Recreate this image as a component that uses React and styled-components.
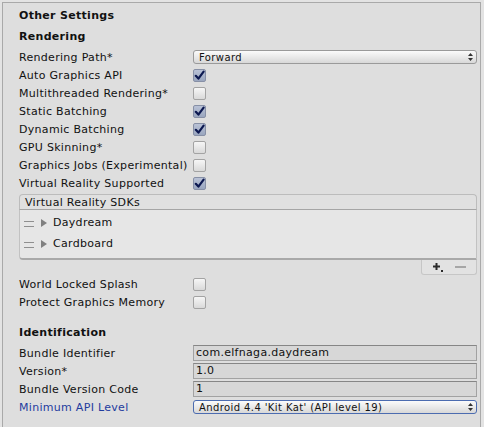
import React from 'react';
import styled, {createGlobalStyle} from 'styled-components';

const GlobalStyle = createGlobalStyle`
  html, body {
    margin: 0;
    padding: 0;
    background: #e3e3e3;
  }
  body {
    font-family: "DejaVu Sans", Verdana, sans-serif;
    font-size: 11px;
    letter-spacing: 0.3px;
    color: #111;
  }
`;

const Panel = styled.div`
  margin: 2px 3px 0 2px;
  height: 425px;
  box-sizing: border-box;
  border: 1px solid #a9a9a9;
  border-bottom: none;
  background: #dedede;
  padding: 4px 3px 0 13px;
`;

const Title = styled.div`
  height: 18px;
  line-height: 18px;
  padding-left: 3px;
  font-weight: bold;
`;

const Header = styled.div`
  height: 18px;
  line-height: 18px;
  margin-top: ${p => p.$top}px;
  margin-bottom: 2px;
  padding-left: 3px;
  font-weight: bold;
`;

const Row = styled.div`
  display: flex;
  align-items: center;
  height: 18px;
`;

const Label = styled.div`
  width: 177px;
  flex: none;
  padding-left: 3px;
  box-sizing: border-box;
  white-space: nowrap;
  color: ${p => (p.$blue ? '#1f3c9e' : '#111')};
`;

const Box = styled.div`
  width: 13px;
  height: 13px;
  box-sizing: border-box;
  border: 1px solid ${p => (p.$on ? '#8790a6' : '#a3a3a3')};
  border-radius: 2px;
  background: ${p =>
    p.$on
      ? 'linear-gradient(#b9c2d6, #9aa6bf)'
      : 'linear-gradient(#f6f6f6, #d9d9d9)'};
  display: flex;
  align-items: center;
  justify-content: center;
`;

const Popup = styled.div`
  flex: 1;
  height: 14px;
  box-sizing: border-box;
  border: 1px solid ${p => (p.$blue ? '#4c6cb0' : '#9a9a9a')};
  border-radius: 3px;
  background: linear-gradient(#fbfbfb, #e6e6e6 60%, #d8d8d8);
  display: flex;
  align-items: center;
  justify-content: space-between;
  padding: 0 3px 0 5px;
  font-size: 10px;
  letter-spacing: 0.4px;
`;

const Field = styled.div`
  flex: 1;
  height: 16px;
  line-height: 14px;
  box-sizing: border-box;
  border: 1px solid #a2a2a2;
  border-top-color: #868686;
  background: #d7d7d7;
  padding-left: 2px;
  font-size: 11px;
`;

const SdkBox = styled.div`
  margin: 2px 0 0 3px;
`;

const SdkHead = styled.div`
  height: 16px;
  line-height: 16px;
  box-sizing: border-box;
  border: 1px solid #bcbcbc;
  border-bottom-color: #a5a5a5;
  border-radius: 4px 4px 0 0;
  background: #e0e0e0;
  padding-left: 5px;
`;

const SdkList = styled.div`
  box-sizing: border-box;
  border: 1px solid #c2c2c2;
  border-top: none;
  border-bottom: 2px solid #a9a9a9;
  border-radius: 0 0 0 4px;
  background: #e6e6e6;
  padding: 2px 0 4px;
`;

const SdkItem = styled.div`
  display: flex;
  align-items: center;
  height: 21px;
  padding-left: 4px;
  gap: 6px;
`;

const Handle = styled.div`
  width: 10px;
  height: 4px;
  margin-top: 3px;
  border-top: 1px solid #8f8f8f;
  border-bottom: 1px solid #8f8f8f;
`;

const Arrow = styled.div`
  width: 0;
  height: 0;
  border-top: 4px solid transparent;
  border-bottom: 4px solid transparent;
  border-left: 6px solid #808080;
  margin-left: 1px;
`;

const Footer = styled.div`
  display: flex;
  justify-content: flex-end;
`;

const FooterTabs = styled.div`
  width: 56px;
  height: 15px;
  box-sizing: border-box;
  border: 1px solid #c6c6c6;
  border-top: none;
  border-radius: 0 0 3px 3px;
  background: #e2e2e2;
  display: flex;
  align-items: center;
  justify-content: space-around;
  padding: 0 4px;
`;

const Check = () => (
  <svg width="11" height="11" viewBox="0 0 11 11">
    <path d="M1.8 5.8 L4.4 8.6 L9.6 1.6" fill="none" stroke="#0c1850" strokeWidth="2.2" strokeLinecap="round" strokeLinejoin="round" />
  </svg>
);

const UpDown = () => (
  <svg width="5" height="8" viewBox="0 0 5 8">
    <path d="M2.5 0 L5 3 L0 3 Z M0 5 L5 5 L2.5 8 Z" fill="#333" />
  </svg>
);

const Plus = () => (
  <svg width="12" height="11" viewBox="0 0 12 11">
    <path d="M4.5 1 V8 M1 4.5 H8" stroke="#2a2a2a" strokeWidth="2" />
    <rect x="9" y="8" width="2" height="2" fill="#2a2a2a" />
  </svg>
);

const Minus = () => (
  <svg width="11" height="4" viewBox="0 0 11 4">
    <rect x="0" y="1" width="11" height="2" fill="#a6a6a6" />
  </svg>
);

const CheckRow = ({label, on}) => (
  <Row>
    <Label>{label}</Label>
    <Box $on={on}>{on && <Check/>}</Box>
  </Row>
);

const PopupRow = ({label, value, blue}) => (
  <Row>
    <Label $blue={blue}>{label}</Label>
    <Popup $blue={blue}>
      <span>{value}</span>
      <UpDown/>
    </Popup>
  </Row>
);

const FieldRow = ({label, value}) => (
  <Row>
    <Label>{label}</Label>
    <Field>{value}</Field>
  </Row>
);

const renderingToggles = [
  ['Auto Graphics API', true],
  ['Multithreaded Rendering*', false],
  ['Static Batching', true],
  ['Dynamic Batching', true],
  ['GPU Skinning*', false],
  ['Graphics Jobs (Experimental)', false],
  ['Virtual Reality Supported', true],
];

const sdks = ['Daydream', 'Cardboard'];

const App = () => (
  <>
    <GlobalStyle/>
    <Panel>
      <Title>Other Settings</Title>
      <Header $top={3}>Rendering</Header>
      <PopupRow label="Rendering Path*" value="Forward"/>
      {renderingToggles.map(([label, on]) => (
        <CheckRow key={label} label={label} on={on}/>
      ))}
      <SdkBox>
        <SdkHead>Virtual Reality SDKs</SdkHead>
        <SdkList>
          {sdks.map(name => (
            <SdkItem key={name}>
              <Handle/>
              <Arrow/>
              <span>{name}</span>
            </SdkItem>
          ))}
        </SdkList>
        <Footer>
          <FooterTabs>
            <Plus/>
            <Minus/>
          </FooterTabs>
        </Footer>
      </SdkBox>
      <CheckRow label="World Locked Splash" on={false}/>
      <CheckRow label="Protect Graphics Memory" on={false}/>
      <Header $top={13}>Identification</Header>
      <FieldRow label="Bundle Identifier" value="com.elfnaga.daydream"/>
      <FieldRow label="Version*" value="1.0"/>
      <FieldRow label="Bundle Version Code" value="1"/>
      <PopupRow label="Minimum API Level" value="Android 4.4 'Kit Kat' (API level 19)" blue/>
    </Panel>
  </>
);

export default App;
